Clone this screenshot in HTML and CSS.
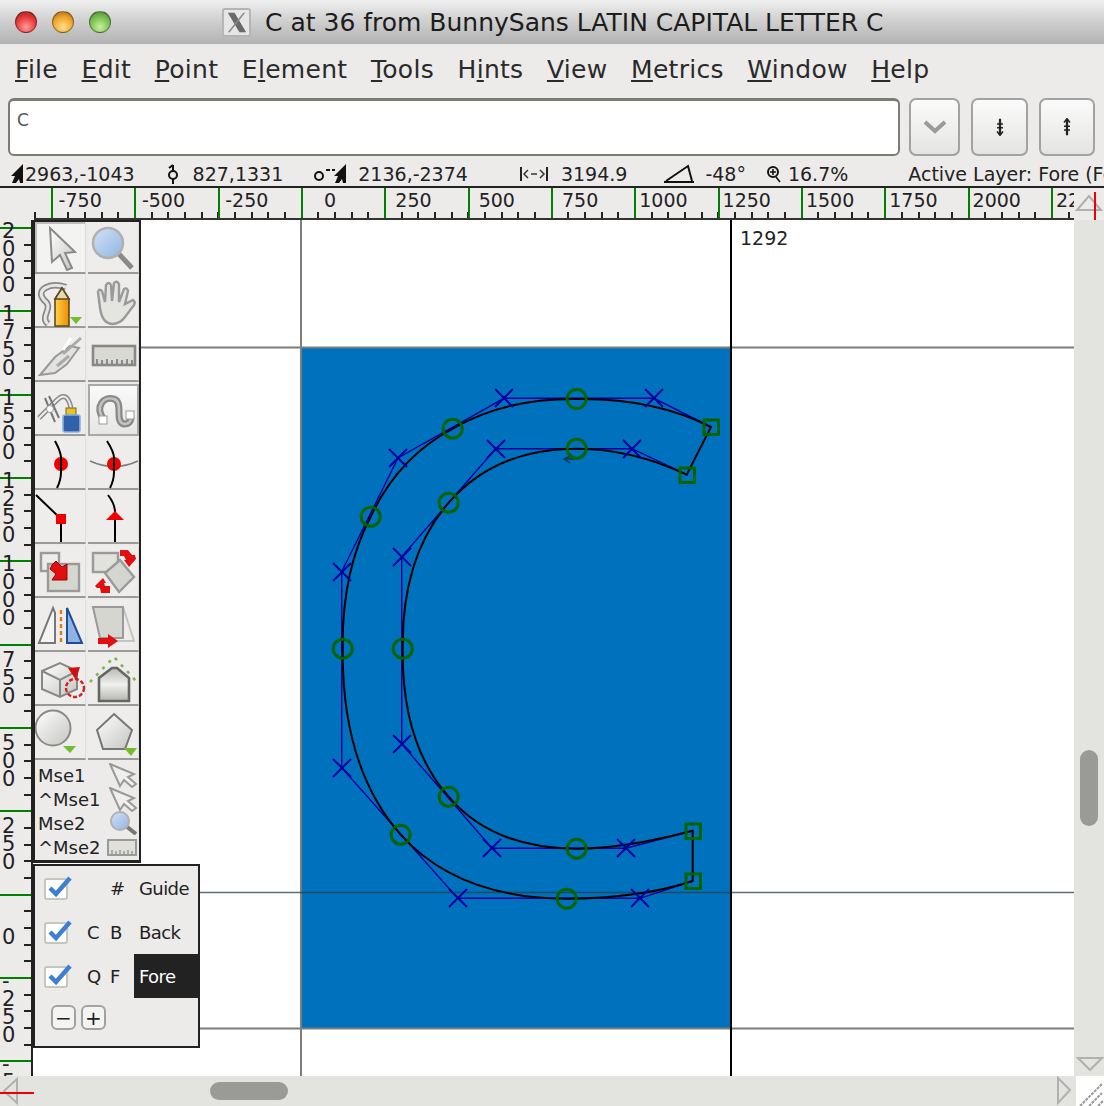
FILE: index.html
```html
<!DOCTYPE html>
<html lang="en">
<head>
    <meta charset="UTF-8">
    <title>C at 36 from BunnySans LATIN CAPITAL LETTER C</title>
    <link rel="stylesheet" href="styles.css">
</head>
<body>
    <!-- shared gradients for the tool icons -->
    <svg class="defs" width="0" height="0">
        <defs>
            <linearGradient id="g-white" x1="0" y1="0" x2="1" y2="1"><stop offset="0" stop-color="#ffffff"/><stop offset="1" stop-color="#c4c4c0"/></linearGradient>
            <linearGradient id="g-grey" x1="0" y1="0" x2="0" y2="1"><stop offset="0" stop-color="#b8b8b4"/><stop offset=".5" stop-color="#f0f0ee"/><stop offset="1" stop-color="#b4b4b0"/></linearGradient>
            <linearGradient id="g-pen" x1="0" y1="0" x2="1" y2="0"><stop offset="0" stop-color="#ffd24a"/><stop offset="1" stop-color="#f08a00"/></linearGradient>
            <linearGradient id="g-blue" x1="0" y1="0" x2="1" y2="1"><stop offset="0" stop-color="#d3e2f5"/><stop offset="1" stop-color="#8fb4e4"/></linearGradient>
        </defs>
    </svg>

    <div class="window">
        <header class="titlebar">
            <div class="lights">
                <span class="light red"></span>
                <span class="light amber"></span>
                <span class="light green"></span>
            </div>
            <svg class="x-icon" width="29" height="29" viewBox="0 0 30 30">
                <rect x="1" y="1" width="28" height="28" rx="2" fill="#e6e6e6" stroke="#b4b4b4" stroke-width="2"/>
                <path d="M6 5 L13 5 L25 25 L18 25 Z" fill="#6a6a6a"/>
                <path d="M22 5 L24 5 L8 25 L6 25 Z" fill="#8a8a8a"/>
            </svg>
            <h1 class="title">C at 36 from BunnySans LATIN CAPITAL LETTER C</h1>
        </header>

        <nav class="menubar">
            <span><u>F</u>ile</span>
            <span><u>E</u>dit</span>
            <span><u>P</u>oint</span>
            <span>E<u>l</u>ement</span>
            <span><u>T</u>ools</span>
            <span>H<u>i</u>nts</span>
            <span><u>V</u>iew</span>
            <span><u>M</u>etrics</span>
            <span><u>W</u>indow</span>
            <span><u>H</u>elp</span>
        </nav>

        <section class="wordline">
            <div class="word-input">C</div>
            <button class="word-btn drop">
                <svg width="26" height="16" viewBox="0 0 26 16"><path d="M3 3 L13 12 L23 3" fill="none" stroke="#9a9a9a" stroke-width="4"/></svg>
            </button>
            <button class="word-btn prev">
                <svg width="8" height="18" viewBox="0 0 10 24"><path d="M5 1 V23" stroke="#222" stroke-width="3"/><path d="M1 8 H9 M1 13 H9 M1 18 L5 23 L9 18" fill="none" stroke="#222" stroke-width="2"/></svg>
            </button>
            <button class="word-btn next">
                <svg width="8" height="18" viewBox="0 0 10 24"><path d="M5 1 V23" stroke="#222" stroke-width="3"/><path d="M1 6 L5 1 L9 6 M1 11 H9 M1 16 H9" fill="none" stroke="#222" stroke-width="2"/></svg>
            </button>
        </section>

        <section class="status">
            <svg class="st-cursor" width="13" height="20" viewBox="0 0 13 20"><path d="M12 0 V19 H9 L8 15 L5 19 H1 L4 12 L0 12 Z" fill="#111"/></svg>
            <span class="st-base">2963,-1043</span>
            <svg class="st-ref" width="12" height="20" viewBox="0 0 12 20"><circle cx="6" cy="11" r="4" fill="none" stroke="#111" stroke-width="2"/><path d="M6 1 V7 M6 15 V20 M2 4 L6 1" fill="none" stroke="#111" stroke-width="2"/></svg>
            <span class="st-pos">827,1331</span>
            <svg class="st-delta" width="33" height="20" viewBox="0 0 33 20"><circle cx="5" cy="12" r="4" fill="none" stroke="#111" stroke-width="2"/><path d="M12 6 H16 M18 6 H21" stroke="#111" stroke-width="2"/><path d="M32 0 V19 H29 L28 15 L25 19 H21 L24 12 L20 12 Z" fill="#111"/></svg>
            <span class="st-rel">2136,-2374</span>
            <svg class="st-dist" width="28" height="16" viewBox="0 0 28 16"><path d="M1 1 V15 M27 1 V15" stroke="#222" stroke-width="2"/><path d="M8 4 L4 8 L8 12 M20 4 L24 8 L20 12 M11 8 H17" fill="none" stroke="#333" stroke-width="1.5"/></svg>
            <span class="st-len">3194.9</span>
            <svg class="st-angle" width="30" height="20" viewBox="0 0 30 20"><path d="M0 18 H30 M2 17 L24 2 L28 17" fill="none" stroke="#111" stroke-width="2"/></svg>
            <span class="st-deg">-48°</span>
            <svg class="st-zoom" width="14" height="20" viewBox="0 0 14 20"><circle cx="6" cy="8" r="5" fill="none" stroke="#111" stroke-width="2"/><path d="M3 8 H9 M6 5 V11 M9 13 L13 18" fill="none" stroke="#111" stroke-width="1.6"/></svg>
            <span class="st-pct">16.7%</span>
            <span class="st-layer">Active Layer: Fore (Fo</span>
        </section>

        <section class="ruler-row">
            <div class="ruler-top">
                <span class="rt-cell">-750</span>
                <span class="rt-cell">-500</span>
                <span class="rt-cell">-250</span>
                <span class="rt-cell">0</span>
                <span class="rt-cell">250</span>
                <span class="rt-cell">500</span>
                <span class="rt-cell">750</span>
                <span class="rt-cell">1000</span>
                <span class="rt-cell">1250</span>
                <span class="rt-cell">1500</span>
                <span class="rt-cell">1750</span>
                <span class="rt-cell">2000</span>
                <span class="rt-cell">2250</span>
            </div>
            <div class="ruler-corner">
                <svg width="30" height="34" viewBox="0 0 30 34">
                    <path d="M3 22 L15 8 L27 22 Z" fill="none" stroke="#b0b0b0" stroke-width="2"/>
                    <path d="M21 4 V34" stroke="#f00000" stroke-width="2"/>
                </svg>
            </div>
        </section>

        <main class="workspace">
            <div class="ruler-left">
                <div class="rl-track">
                    <div class="rl-cell d4"><span>2000</span></div>
                    <div class="rl-cell d4"><span>1750</span></div>
                    <div class="rl-cell d4"><span>1500</span></div>
                    <div class="rl-cell d4"><span>1250</span></div>
                    <div class="rl-cell d4"><span>1000</span></div>
                    <div class="rl-cell d3"><span>750</span></div>
                    <div class="rl-cell d3"><span>500</span></div>
                    <div class="rl-cell d3"><span>250</span></div>
                    <div class="rl-cell d1"><span>0</span></div>
                    <div class="rl-cell dn"><span>-250</span></div>
                    <div class="rl-cell dn"><span>-500</span></div>
                </div>
            </div>

            <div class="canvas">
                <svg class="glyph" width="1041" height="856" viewBox="33 220 1041 856">
                    <rect x="301" y="347" width="430" height="681" fill="#0071bc"/>
                    <g stroke="#7d7d7d" stroke-width="2">
                        <path d="M33 347.5 H1074 M33 1028.5 H1074 M301 220 V1076"/>
                    </g>
                    <path d="M33 892.5 H1074" stroke="#22404f" stroke-opacity=".75" stroke-width="1.6"/>
                    <path d="M731 220 V1076" stroke="#000" stroke-width="2"/>
                    <text class="ref-label" x="740" y="245">1292</text>

                    <!-- control polygon -->
                    <g fill="none" stroke="#0000a0" stroke-width="1.4">
                        <path d="M711 427 L654 398.3 L504 398.3 L398 458 L341.7 571.7 L341.7 767.7 L457.7 898.3 L640 898.3 L692.7 881"/>
                        <path d="M692.7 830.7 L626 848.3 L492 848.3 L401.7 744 L401.7 556.7 L495.7 448.7 L632 448.7 L686.7 474.7"/>
                    </g>

                    <!-- the contour -->
                    <path fill="none" stroke="#000" stroke-width="2" d="M711 427 Q654 398 576.7 399 Q504 398.3 452.7 428.7 Q398 458 370.7 516.7 Q341.7 571.7 342.7 648.7 Q341.7 767.7 400.7 834.7 Q457.7 898.3 566.7 898.7 Q640 898.3 692.7 881 L692.7 830.7 Q626 848.3 576.7 848.7 Q492 848.3 448.7 796.7 Q401.7 744 402.7 648.7 Q401.7 556.7 448.7 502.7 Q495.7 448.7 576.7 448.7 Q632 448.7 686.7 474.7 Z"/>
                    <path d="M572 455 L564 459 L570 463 M564 459 H574" fill="none" stroke="#003a50" stroke-width="1.4"/>

                    <!-- off curve points -->
                    <g fill="none" stroke="#0000a0" stroke-width="2">
                        <path d="M645 389 L663 407 M663 389 L645 407"/>
                        <path d="M495 389 L513 407 M513 389 L495 407"/>
                        <path d="M389 449 L407 467 M407 449 L389 467"/>
                        <path d="M333 563 L351 581 M351 563 L333 581"/>
                        <path d="M333 759 L351 777 M351 759 L333 777"/>
                        <path d="M449 889 L467 907 M467 889 L449 907"/>
                        <path d="M631 889 L649 907 M649 889 L631 907"/>
                        <path d="M617 839 L635 857 M635 839 L617 857"/>
                        <path d="M483 839 L501 857 M501 839 L483 857"/>
                        <path d="M393 735 L411 753 M411 735 L393 753"/>
                        <path d="M393 548 L411 566 M411 548 L393 566"/>
                        <path d="M487 440 L505 458 M505 440 L487 458"/>
                        <path d="M623 440 L641 458 M641 440 L623 458"/>
                    </g>

                    <!-- on curve points -->
                    <g fill="none" stroke="#006400" stroke-width="3">
                        <circle cx="576.7" cy="399" r="9.5"/>
                        <circle cx="452.7" cy="428.7" r="9.5"/>
                        <circle cx="370.7" cy="516.7" r="9.5"/>
                        <circle cx="342.7" cy="648.7" r="9.5"/>
                        <circle cx="400.7" cy="834.7" r="9.5"/>
                        <circle cx="566.7" cy="898.7" r="9.5"/>
                        <circle cx="576.7" cy="848.7" r="9.5"/>
                        <circle cx="448.7" cy="796.7" r="9.5"/>
                        <circle cx="402.7" cy="648.7" r="9.5"/>
                        <circle cx="448.7" cy="502.7" r="9.5"/>
                        <circle cx="576.7" cy="448.7" r="9.5"/>
                        <rect x="704" y="420" width="14.5" height="14.5"/>
                        <rect x="680" y="468" width="14.5" height="14.5"/>
                        <rect x="686" y="824" width="14.5" height="14.5"/>
                        <rect x="686" y="874" width="14.5" height="14.5"/>
                    </g>
                </svg>
            </div>

            <div class="vscroll">
                <div class="vthumb"></div>
                <svg class="vdown" width="28" height="14" viewBox="0 0 28 14"><path d="M2 1 H26 L14 13 Z" fill="none" stroke="#b0b0b0" stroke-width="2"/></svg>
            </div>

            <aside class="tools">
                <div class="tool-grid">
                    <div class="tool pressed"><svg class="ico" viewBox="0 0 52 52"><path d="M15 6 L40 30 L30 31 L37 46 L32 48 L25 33 L17 40 Z" fill="url(#g-white)" stroke="#8a8a8a" stroke-width="2"/></svg></div>
                    <div class="tool"><svg class="ico" viewBox="0 0 52 52"><path d="M31 32 L44 46" stroke="#8a8a8a" stroke-width="5"/><circle cx="20" cy="21" r="15" fill="url(#g-blue)" stroke="#b0b0b0" stroke-width="2.5"/></svg></div>

                    <div class="tool"><svg class="ico" viewBox="0 0 52 52">
                        <path d="M13 48 C4 40 20 32 9 24 C0 14 14 6 31 11" fill="none" stroke="#8a8a8a" stroke-width="6.5"/>
                        <path d="M13 48 C4 40 20 32 9 24 C0 14 14 6 31 11" fill="none" stroke="#e6e6e4" stroke-width="3"/>
                        <path d="M20 23 L27 12 L34 23 V50 H20 Z" fill="url(#g-pen)" stroke="#5a4a20" stroke-width="1.6"/>
                        <path d="M20 23 L27 12 L34 23 Z" fill="#e8d8b0" stroke="#5a4a20" stroke-width="1.6"/>
                        <path d="M35 41 H47 L41 48 Z" fill="#6fbe2e"/>
                    </svg></div>
                    <div class="tool"><svg class="ico" viewBox="0 0 52 52"><path d="M12 32 L10 16 Q11 12 14 15 L17 26 L18 9 Q21 5 23 9 L24 25 L26 7 Q29 4 31 8 L31 26 L36 13 Q39 11 40 15 L37 28 L45 24 Q48 26 46 29 L37 41 Q32 48 24 48 Q14 47 12 32 Z" fill="#e4e4e0" stroke="#9a9a9a" stroke-width="2.4"/></svg></div>

                    <div class="tool"><svg class="ico" viewBox="0 0 52 52"><path d="M5 45 L20 27 L35 16 L44 18 L32 34 L20 43 Z" fill="#e2e2de" stroke="#999" stroke-width="2"/><path d="M28 24 L46 8 M22 36 L34 26" stroke="#aaa" stroke-width="3"/><path d="M36 8 L28 20" stroke="#fff" stroke-width="3"/></svg></div>
                    <div class="tool"><svg class="ico" viewBox="0 0 52 52"><rect x="5" y="16" width="42" height="19" fill="#d9d9d3" stroke="#888" stroke-width="2.6"/><path d="M9 34 V29 M14 34 V30 M19 34 V29 M24 34 V30 M29 34 V29 M34 34 V30 M39 34 V29 M44 34 V30" stroke="#777" stroke-width="1.6"/></svg></div>

                    <div class="tool"><svg class="ico" viewBox="0 0 52 52">
                        <path d="M4 34 L22 16 Q32 6 36 24" fill="none" stroke="#8a8a8a" stroke-width="5"/>
                        <path d="M4 34 L22 16 Q32 6 36 24" fill="none" stroke="#eee" stroke-width="2"/>
                        <path d="M10 14 L20 38 M14 12 L24 34" stroke="#777" stroke-width="2"/>
                        <circle cx="15" cy="25" r="3.5" fill="#fff" stroke="#999"/>
                        <rect x="31" y="24" width="10" height="7" fill="#e8c22a" stroke="#7a6a10"/>
                        <rect x="28" y="31" width="17" height="17" rx="2" fill="#2f62a8" stroke="#8fb0dc" stroke-width="1.6"/>
                    </svg></div>
                    <div class="tool raised"><svg class="ico" viewBox="0 0 52 52">
                        <path d="M14 34 C4 20 14 10 24 13 C34 16 24 36 34 38 C40 38 42 34 40 28" fill="none" stroke="#8a8a8a" stroke-width="7"/>
                        <path d="M14 34 C4 20 14 10 24 13 C34 16 24 36 34 38 C40 38 42 34 40 28" fill="none" stroke="#c4c4c0" stroke-width="2.5"/>
                        <rect x="9" y="30" width="8" height="8" fill="#fff" stroke="#999"/>
                        <rect x="36" y="25" width="8" height="8" fill="#fff" stroke="#999"/>
                    </svg></div>

                    <div class="tool"><svg class="ico" viewBox="0 0 52 52"><path d="M20 3 Q26 14 26 20 V34 Q26 42 22 50" fill="none" stroke="#000" stroke-width="2"/><circle cx="26" cy="26" r="7" fill="#f00000"/><path d="M26 19 V33" stroke="#000" stroke-width="2"/></svg></div>
                    <div class="tool"><svg class="ico" viewBox="0 0 52 52"><path d="M2 23 Q26 34 50 23" fill="none" stroke="#7d7d7d" stroke-width="1.6"/><path d="M19 3 Q26 14 26 20 V34 Q26 42 22 50" fill="none" stroke="#000" stroke-width="2"/><circle cx="26" cy="26" r="7" fill="#f00000"/><path d="M26 19 V33" stroke="#000" stroke-width="2"/></svg></div>

                    <div class="tool"><svg class="ico" viewBox="0 0 52 52"><path d="M1 3 L26 27 V50" fill="none" stroke="#000" stroke-width="2"/><rect x="21" y="22" width="10" height="10" fill="#f00000"/></svg></div>
                    <div class="tool"><svg class="ico" viewBox="0 0 52 52"><path d="M20 3 Q27 12 27 20 V50" fill="none" stroke="#000" stroke-width="2"/><path d="M27 19 L36 28 H18 Z" fill="#f00000"/></svg></div>

                    <div class="tool"><svg class="ico" viewBox="0 0 52 52">
                        <rect x="6" y="7" width="18" height="18" fill="none" stroke="#9a9a9a" stroke-width="2.4"/>
                        <rect x="13" y="18" width="31" height="27" fill="#d6d6d0" stroke="#9a9a9a" stroke-width="2.4"/>
                        <path d="M17 19 L21 15 L27 21 L32 18 L32 34 L17 34 L21 28 L15 23 Z" fill="#e01010" stroke="#a00000"/>
                    </svg></div>
                    <div class="tool"><svg class="ico" viewBox="0 0 52 52">
                        <rect x="5" y="7" width="25" height="19" fill="#e2e2dc" stroke="#9a9a9a" stroke-width="2.4"/>
                        <path d="M32 14 L46 31 L31 46 L17 27 Z" fill="#d6d6d0" stroke="#9a9a9a" stroke-width="2.4"/>
                        <path d="M32 4 H40 L44 9 H47 L48 13 L41 21 L36 14 H38 L36 10 H32 Z" fill="#e01010"/>
                        <path d="M7 40 L15 32 L18 37 H16 L17 40 H22 V47 H13 L12 42 H9 Z" fill="#e01010"/>
                    </svg></div>

                    <div class="tool"><svg class="ico" viewBox="0 0 52 52">
                        <path d="M18 8 L4 43 H20 V13 Z" fill="#f4f4f2" stroke="#777" stroke-width="2"/>
                        <path d="M32 8 V43 H47 Z" fill="#8fb4e4" stroke="#1f4d96" stroke-width="2"/>
                        <path d="M26 10 V42" stroke="#e07a10" stroke-width="2.4" stroke-dasharray="4 3"/>
                    </svg></div>
                    <div class="tool"><svg class="ico" viewBox="0 0 52 52">
                        <path d="M5 7 H35 L46 41 H14 Z" fill="none" stroke="#c4c4c0" stroke-width="2"/>
                        <path d="M5 7 H35 V38 H12 Z" fill="#d6d6d0" stroke="#9a9a9a" stroke-width="2"/>
                        <path d="M10 38 H20 V34 L30 41 L20 48 V44 H10 Z" fill="#e01010"/>
                    </svg></div>

                    <div class="tool"><svg class="ico" viewBox="0 0 52 52">
                        <path d="M7 17 L25 9 L42 17 V35 L25 43 L7 35 Z" fill="url(#g-white)" stroke="#888" stroke-width="2"/>
                        <path d="M7 17 L25 26 L42 17 M25 26 V43" fill="none" stroke="#888" stroke-width="2"/>
                        <circle cx="40" cy="34" r="9" fill="none" stroke="#d02020" stroke-width="2.4" stroke-dasharray="4 2"/>
                        <path d="M33 14 L45 13 L41 26 Z" fill="#d01010"/>
                    </svg></div>
                    <div class="tool"><svg class="ico" viewBox="0 0 52 52">
                        <path d="M2 28 L26 3 L49 28" fill="none" stroke="#7cb84a" stroke-width="2.6" stroke-dasharray="3 6"/>
                        <path d="M11 47 V24 L24 14 H29 L41 24 V47 Z" fill="url(#g-grey)" stroke="#666" stroke-width="2.6"/>
                    </svg></div>

                    <div class="tool"><svg class="ico" viewBox="0 0 52 52"><circle cx="18" cy="20" r="17.5" fill="url(#g-white)" stroke="#8a8a8a" stroke-width="2"/><path d="M28 38 H41 L35 45 Z" fill="#6fbe2e"/></svg></div>
                    <div class="tool"><svg class="ico" viewBox="0 0 52 52"><path d="M26 6 L44 22 L37 41 H15 L9 22 Z" fill="url(#g-white)" stroke="#777" stroke-width="2"/><path d="M36 40 H49 L43 48 Z" fill="#6fbe2e"/></svg></div>
                </div>

                <ul class="mouse-list">
                    <li><span>Mse1</span><svg width="28" height="25" viewBox="0 0 28 25"><path d="M1 1 L25 11 L19 14 L27 21 L23 24 L15 17 L11 23 Z" fill="#efefed" stroke="#999" stroke-width="2"/></svg></li>
                    <li><span>^Mse1</span><svg width="28" height="25" viewBox="0 0 28 25"><path d="M1 1 L25 11 L19 14 L27 21 L23 24 L15 17 L11 23 Z" fill="#efefed" stroke="#999" stroke-width="2"/></svg></li>
                    <li><span>Mse2</span><svg width="28" height="24" viewBox="0 0 28 24"><path d="M17 15 L27 23" stroke="#777" stroke-width="4"/><circle cx="11" cy="10" r="9" fill="url(#g-blue)" stroke="#b0b0b0" stroke-width="2"/></svg></li>
                    <li><span>^Mse2</span><svg width="30" height="20" viewBox="0 0 30 20"><rect x="1" y="3" width="28" height="15" fill="#e0e0da" stroke="#999" stroke-width="2"/><path d="M5 17 V13 M9 17 V14 M13 17 V13 M17 17 V14 M21 17 V13 M25 17 V14" stroke="#777"/></svg></li>
                </ul>
            </aside>

            <aside class="layers">
                <div class="layer-row">
                    <svg class="check" width="30" height="26" viewBox="0 0 30 26"><rect x="1" y="4" width="22" height="20" rx="2" fill="#fff" stroke="#c4c8bc" stroke-width="2"/><path d="M6 13 L12 19 L26 3" fill="none" stroke="#3f7fd0" stroke-width="4.5"/></svg>
                    <span class="key-a"></span><span class="key-b">#</span>
                    <span class="layer-name">Guide</span>
                </div>
                <div class="layer-row">
                    <svg class="check" width="30" height="26" viewBox="0 0 30 26"><rect x="1" y="4" width="22" height="20" rx="2" fill="#fff" stroke="#c4c8bc" stroke-width="2"/><path d="M6 13 L12 19 L26 3" fill="none" stroke="#3f7fd0" stroke-width="4.5"/></svg>
                    <span class="key-a">C</span><span class="key-b">B</span>
                    <span class="layer-name">Back</span>
                </div>
                <div class="layer-row">
                    <svg class="check" width="30" height="26" viewBox="0 0 30 26"><rect x="1" y="4" width="22" height="20" rx="2" fill="#fff" stroke="#c4c8bc" stroke-width="2"/><path d="M6 13 L12 19 L26 3" fill="none" stroke="#3f7fd0" stroke-width="4.5"/></svg>
                    <span class="key-a">Q</span><span class="key-b">F</span>
                    <span class="layer-name active">Fore</span>
                </div>
                <div class="layer-btns">
                    <button class="mini-btn">−</button>
                    <button class="mini-btn">+</button>
                </div>
            </aside>
        </main>

        <footer class="hscroll">
            <div class="htrack">
                <svg class="hleft" width="36" height="30" viewBox="0 0 36 30"><path d="M4 15 L17 3 V27 Z" fill="none" stroke="#b0b0b0" stroke-width="2"/><path d="M0 17 H34" stroke="#f00000" stroke-width="2"/></svg>
                <div class="hthumb"></div>
                <svg class="hright" width="16" height="30" viewBox="0 0 16 30"><path d="M14 14 L2 2 V27 Z" fill="none" stroke="#b0b0b0" stroke-width="2"/></svg>
            </div>
            <div class="grip">
                <svg width="28" height="30" viewBox="0 0 28 30"><path d="M4 30 L26 8 M13 30 L26 17 M22 30 L27 25" stroke="#999" stroke-width="2" stroke-dasharray="3 1"/></svg>
            </div>
        </footer>
    </div>
</body>
</html>
```

FILE: styles.css
```css
* {
    box-sizing: border-box;
}

html, body {
    margin: 0;
    padding: 0;
    height: 100%;
    overflow: hidden;
}

body {
    font-family: "DejaVu Sans", sans-serif;
    color: #222;
    background: #ecebe9;
}

.defs {
    position: absolute;
}

.window {
    display: flex;
    flex-direction: column;
    height: 1106px;
}

/* title bar */
.titlebar {
    display: flex;
    align-items: center;
    flex: none;
    height: 44px;
    padding-left: 15px;
    background: linear-gradient(#f0f0f0, #d4d4d4 40%, #b2b2b2);
}

.lights {
    display: flex;
    gap: 15px;
}

.light {
    width: 22px;
    height: 22px;
    border-radius: 50%;
    border: 1px solid rgba(0, 0, 0, 0.35);
}

.light.red {
    background: radial-gradient(circle at 50% 75%, #ff9a9a, #e83a3a 55%, #8e2020);
}

.light.amber {
    background: radial-gradient(circle at 50% 75%, #ffe08a, #f0a52a 55%, #96661a);
}

.light.green {
    background: radial-gradient(circle at 50% 75%, #c8f0a0, #78c050 55%, #4c7c34);
}

.x-icon {
    margin-left: 111px;
}

.title {
    margin: 0 0 0 14px;
    font-size: 25px;
    font-weight: normal;
    color: #1c1c1c;
    white-space: nowrap;
}

/* menu */
.menubar {
    display: flex;
    align-items: center;
    gap: 23.5px;
    flex: none;
    height: 54px;
    padding: 0 0 4px 15px;
    font-size: 25px;
    letter-spacing: 0.3px;
    color: #2a2a2a;
}

/* word line */
.wordline {
    display: flex;
    flex: none;
    height: 60px;
    padding: 0 9px 2px 8px;
}

.word-input {
    width: 892px;
    height: 58px;
    padding: 9px 0 0 7px;
    font-size: 17px;
    color: #555;
    background: #fff;
    border: 2px solid #7b7b78;
    border-top-width: 3px;
    border-radius: 6px;
}

.word-btn {
    display: flex;
    align-items: center;
    justify-content: center;
    height: 58px;
    padding: 0;
    border: 2px solid #a2a2a0;
    border-radius: 7px;
    background: linear-gradient(#fbfbfb, #e4e4e2);
}

.drop {
    width: 51px;
    margin-left: 9px;
}

.prev {
    width: 57px;
    margin-left: 11px;
}

.next {
    width: 56px;
    margin-left: 11px;
}

/* status line */
.status {
    display: flex;
    align-items: center;
    flex: none;
    height: 30px;
    padding: 3px 0 0 11px;
    font-size: 19px;
    white-space: nowrap;
    overflow: hidden;
    border-bottom: 2px solid #222;
}

.status > * {
    flex: none;
}

.st-base { margin-left: 1px; }
.st-ref { margin-left: 32px; }
.st-pos { margin-left: 14px; }
.st-delta { margin-left: 31px; }
.st-rel { margin-left: 11px; }
.st-dist { margin-left: 52px; }
.st-len { margin-left: 13px; }
.st-angle { margin-left: 37px; }
.st-deg { margin-left: 11px; }
.st-zoom { margin-left: 21px; }
.st-pct { margin-left: 7px; }
.st-layer { margin-left: 60px; }

/* rulers */
.ruler-row {
    display: flex;
    flex: none;
    height: 32px;
}

.ruler-top {
    display: flex;
    flex: none;
    width: 1040px;
    margin-left: 34px;
    padding-left: 17px;
    overflow: hidden;
    border-bottom: 2px solid #333;
    background: repeating-linear-gradient(to right, #222 0 2px, transparent 2px 16.67px) 0 bottom / 100% 6px no-repeat;
}

.rt-cell {
    flex: none;
    width: 83.33px;
    padding: 0 27px 0 0;
    font-size: 19px;
    line-height: 24px;
    text-align: center;
    border-left: 2px solid #008000;
}

.ruler-corner {
    flex: none;
    width: 30px;
    height: 32px;
    position: relative;
}

.ruler-corner svg {
    position: absolute;
    top: 0;
    left: 0;
}

.workspace {
    display: flex;
    flex: 1;
    min-height: 0;
    position: relative;
}

.ruler-left {
    flex: none;
    width: 33px;
    overflow: hidden;
    border-right: 2px solid #222;
}

.rl-track {
    display: flex;
    flex-direction: column;
    margin-top: 7px;
    height: 920px;
    background: repeating-linear-gradient(to bottom, #222 0 2px, transparent 2px 16.67px) right top / 7px 100% no-repeat;
}

.rl-cell {
    flex: none;
    height: 83.33px;
    border-top: 2px solid #008000;
    font-size: 21px;
    line-height: 18px;
}

.rl-cell span {
    display: block;
    width: 14px;
    margin-left: 2px;
    word-break: break-all;
}

.d4 span { margin-top: -7px; }
.d3 span { margin-top: 5px; }
.d1 span { margin-top: 32px; }
.dn span { margin-top: -7px; }

/* glyph window */
.canvas {
    flex: 1;
    position: relative;
    background: #fff;
    overflow: hidden;
}

.glyph {
    display: block;
}

.ref-label {
    font-family: "DejaVu Sans", sans-serif;
    font-size: 19px;
    fill: #222;
}

.vscroll {
    display: flex;
    flex-direction: column;
    flex: none;
    width: 30px;
    padding: 530px 0 5px 6px;
    background: #e3e3df;
}

.vthumb {
    width: 18px;
    height: 76px;
    border-radius: 9px;
    background: #9a9a96;
}

.vdown {
    margin: auto 0 0 -4px;
}

.hscroll {
    display: flex;
    flex: none;
    height: 30px;
    background: #e3e3df;
}

.htrack {
    display: flex;
    align-items: center;
    flex: none;
    width: 1076px;
}

.hleft {
    flex: none;
}

.hthumb {
    flex: none;
    width: 78px;
    height: 18px;
    margin-left: 174px;
    border-radius: 9px;
    background: #9a9a96;
}

.hright {
    flex: none;
    margin-left: 768px;
}

.grip {
    flex: 1;
    background: #fff;
}

.grip svg {
    display: block;
}

/* floating palettes */
.tools {
    position: absolute;
    left: 33px;
    top: 0;
    width: 108px;
    height: 643px;
    padding-top: 2px;
    background: #ecebe9;
    border: solid #222;
    border-width: 0 2px 3px 2px;
    box-shadow: inset 0 2px 0 #222;
}

.tool-grid {
    display: grid;
    grid-template-columns: 51px 51px;
    grid-auto-rows: 52px;
    gap: 2px;
}

.tool {
    border-bottom: 2px solid #9a9a98;
    border-right: 1px solid #dcdcda;
    background: #eeedeb;
}

.tool.pressed {
    box-shadow: inset 2px 2px 0 #bdbdbb;
    background: #f3f3f1;
}

.tool.raised {
    background: linear-gradient(#fafafa, #e6e6e4);
    border: 2px solid #a8a8a6;
}

.ico {
    display: block;
    width: 52px;
    height: 52px;
    overflow: hidden;
}

.mouse-list {
    margin: 3px 0 0;
    padding: 0 2px 0 3px;
    list-style: none;
    font-size: 18px;
}

.mouse-list li {
    display: flex;
    align-items: center;
    justify-content: space-between;
    height: 24px;
}

.layers {
    position: absolute;
    left: 33px;
    top: 644px;
    width: 167px;
    height: 184px;
    background: #ecebe9;
    border: 2px solid #222;
    font-size: 18px;
}

.layer-row {
    display: flex;
    align-items: center;
    height: 44px;
}

.check {
    flex: none;
    margin-left: 9px;
}

.key-a {
    width: 13px;
    margin-left: 13px;
}

.key-b {
    width: 13px;
    margin-left: 10px;
}

.layer-name {
    flex: 1;
    align-self: stretch;
    display: flex;
    align-items: center;
    margin-left: 11px;
    padding-left: 5px;
    font-size: 18px;
    letter-spacing: -0.6px;
}

.layer-name.active {
    color: #fff;
    background: #222;
}

.layer-btns {
    display: flex;
    gap: 5px;
    margin: 7px 0 0 16px;
}

.mini-btn {
    width: 25px;
    height: 25px;
    padding: 0;
    font-family: "DejaVu Sans", sans-serif;
    font-size: 20px;
    line-height: 20px;
    color: #222;
    background: #f4f4f2;
    border: 2px solid #a2a2a0;
    border-radius: 6px;
}
```
